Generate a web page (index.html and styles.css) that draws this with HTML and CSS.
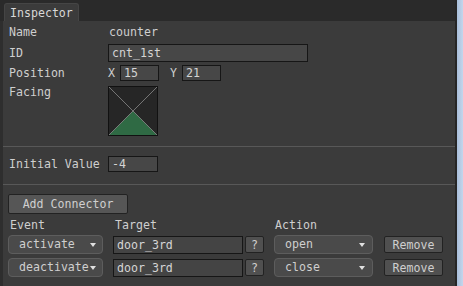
FILE: index.html
```html
<!DOCTYPE html>
<html lang="en">
<head>
    <meta charset="UTF-8">
    <title>Inspector</title>
    <link rel="stylesheet" href="styles.css">
</head>
<body>
    <div class="window">
        <div class="panel">
            <div class="tabbar">
                <div class="tab">Inspector</div>
            </div>
            <div class="body">
                <!-- Basic properties -->
                <div class="section props">
                    <div class="row row-name">
                        <span class="label">Name</span>
                        <span class="value">counter</span>
                    </div>
                    <div class="row row-id">
                        <span class="label">ID</span>
                        <div class="field field-id">cnt_1st</div>
                    </div>
                    <div class="row row-pos">
                        <span class="label">Position</span>
                        <div class="coords">
                            <span class="axis">X</span>
                            <div class="field field-small">15</div>
                            <span class="axis axis-y">Y</span>
                            <div class="field field-small">21</div>
                        </div>
                    </div>
                    <div class="row row-facing">
                        <span class="label">Facing</span>
                        <div class="facing">
                            <svg width="48" height="48" viewBox="0 0 48 48">
                                <rect width="48" height="48" fill="#262626"/>
                                <polygon points="0,48 24,24 48,48" fill="#2f6a44"/>
                                <line x1="0" y1="0" x2="48" y2="48" stroke="#8a8a8a" stroke-width="0.8"/>
                                <line x1="48" y1="0" x2="0" y2="48" stroke="#8a8a8a" stroke-width="0.8"/>
                            </svg>
                        </div>
                    </div>
                </div>

                <div class="section init">
                    <div class="row">
                        <span class="label">Initial Value</span>
                        <div class="field field-small field-init">-4</div>
                    </div>
                </div>

                <!-- Connectors -->
                <div class="section connectors">
                    <button class="btn btn-add">Add Connector</button>
                    <div class="conn-head">
                        <span class="col-event">Event</span>
                        <span class="col-target">Target</span>
                        <span class="col-action">Action</span>
                    </div>
                    <div class="conn-row">
                        <div class="select sel-event"><span>activate</span><i class="arrow"></i></div>
                        <div class="field field-target">door_3rd</div>
                        <button class="btn btn-q">?</button>
                        <div class="select sel-action"><span>open</span><i class="arrow"></i></div>
                        <button class="btn btn-remove">Remove</button>
                    </div>
                    <div class="conn-row">
                        <div class="select sel-event"><span>deactivate</span><i class="arrow"></i></div>
                        <div class="field field-target">door_3rd</div>
                        <button class="btn btn-q">?</button>
                        <div class="select sel-action"><span>close</span><i class="arrow"></i></div>
                        <button class="btn btn-remove">Remove</button>
                    </div>
                </div>
            </div>
        </div>
        <div class="edge"></div>
        <div class="scroll"></div>
    </div>
</body>
</html>
```

FILE: styles.css
```css
/* Reset */
body,
div,
span,
button {
    margin: 0;
    padding: 0;
    box-sizing: border-box;
}

body {
    font-family: "DejaVu Sans Mono", monospace;
    font-size: 11.6px;
    line-height: 14px;
    color: #cfcfcf;
    background-color: #2b2b2b;
    width: 463px;
    height: 286px;
    overflow: hidden;
}

.window {
    display: flex;
    height: 286px;
}

.panel {
    width: 455px;
    display: flex;
    flex-direction: column;
}

.edge {
    width: 2px;
    background-color: #262626;
}

.scroll {
    flex: 1;
    background: linear-gradient(to right, #a9bfdb, #c4d6ec);
}

/* Tab bar */
.tabbar {
    height: 21px;
    padding: 3px 0 0 4px;
    background-color: #2a2a2a;
    display: flex;
}

.tab {
    height: 18px;
    width: 75px;
    padding: 2px 0 0 5px;
    background-color: #3b3b3b;
    border: 1px solid #454545;
    border-bottom: none;
    border-radius: 3px 3px 0 0;
    color: #d8d8d8;
}

/* Body */
.body {
    flex: 1;
    background-color: #3b3b3b;
    border-left: 3px solid #2e2e2e;
}

.section {
    border-bottom: 1px solid #585858;
}

.row {
    display: flex;
    align-items: center;
}

.label {
    width: 105px;
    padding-left: 6px;
    flex-shrink: 0;
}

.props {
    padding: 2px 0 10px;
}

.row-name {
    height: 18px;
}

.row-name .value {
    padding-left: 1px;
}

.row-id {
    margin-top: 3px;
    height: 18px;
}

.row-pos {
    margin-top: 2px;
    height: 17px;
}

.row-facing {
    margin-top: 4px;
    align-items: flex-start;
}

.field {
    background-color: #474747;
    border: 1px solid #161616;
    padding-left: 3px;
    color: #d4d4d4;
    white-space: nowrap;
}

.field-id {
    width: 200px;
    height: 18px;
    line-height: 16px;
}

.coords {
    display: flex;
    align-items: center;
}

.axis {
    width: 12px;
}

.axis-y {
    margin-left: 11px;
}

.field-small {
    width: 39px;
    height: 16px;
    line-height: 14px;
}

.facing {
    margin-top: 1px;
    width: 50px;
    height: 50px;
    border: 1px solid #111;
}

.facing svg {
    display: block;
}

.init {
    padding: 9px 0 12px;
}

.init .row {
    height: 16px;
}

.field-init {
    width: 50px;
}

/* Connectors */
.connectors {
    border-bottom: none;
    padding: 9px 0 0 5px;
}

.btn {
    font-family: inherit;
    font-size: inherit;
    line-height: 14px;
    color: #cfcfcf;
    background-color: #525252;
    border: 1px solid #222;
    border-radius: 2px;
    cursor: pointer;
}

.btn-add {
    display: block;
    width: 120px;
    height: 20px;
    background-color: #565656;
}

.conn-head {
    display: flex;
    margin-top: 4px;
    height: 14px;
}

.col-event {
    width: 107px;
    padding-left: 2px;
}

.col-target {
    width: 160px;
}

.conn-row {
    display: flex;
    align-items: center;
    margin-top: 3px;
    height: 19px;
}

.conn-row + .conn-row {
    margin-top: 4px;
}

.select {
    position: relative;
    height: 19px;
    background-color: #4a4a4a;
    border: 1px solid #5d5d5d;
    border-radius: 4px;
    padding-left: 10px;
    line-height: 17px;
}

.arrow {
    position: absolute;
    top: 7px;
    border-left: 3px solid transparent;
    border-right: 3px solid transparent;
    border-top: 4px solid #e0e0e0;
}

.sel-event {
    width: 95px;
}

.sel-event .arrow {
    left: 81px;
}

.field-target {
    margin-left: 10px;
    width: 130px;
    height: 18px;
    line-height: 16px;
    background-color: #444;
}

.btn-q {
    margin-left: 2px;
    width: 19px;
    height: 17px;
    background-color: #505050;
}

.sel-action {
    margin-left: 10px;
    width: 99px;
}

.sel-action .arrow {
    left: 84px;
}

.btn-remove {
    margin-left: 11px;
    width: 59px;
    height: 17px;
    background-color: #505050;
}
```
